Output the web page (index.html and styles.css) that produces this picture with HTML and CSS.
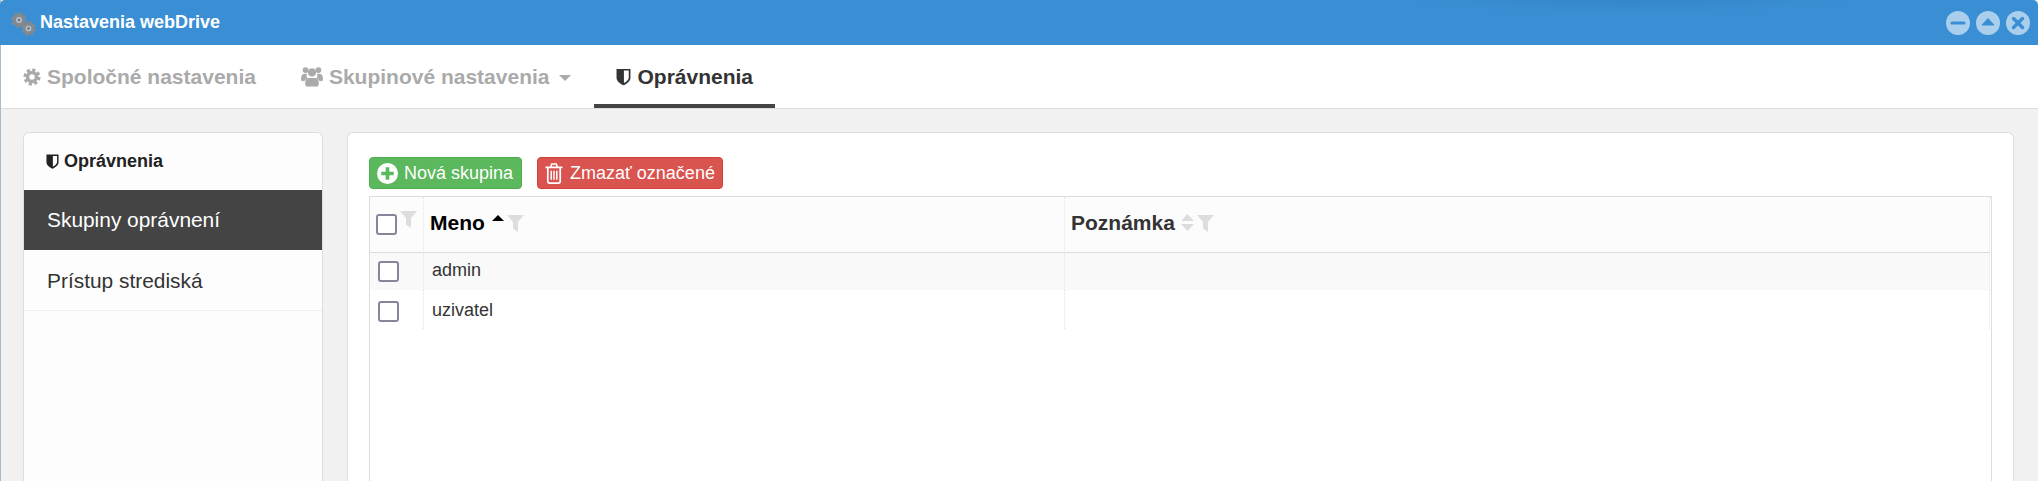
FILE: index.html
```html
<!DOCTYPE html>
<html lang="sk">
<head>
<meta charset="utf-8">
<title>Nastavenia webDrive</title>
<link rel="stylesheet" href="styles.css">
</head>
<body>
<svg class="defs" width="0" height="0" aria-hidden="true">
  <defs>
    <symbol id="shield" viewBox="0 0 14 16"><path d="M.5.5h13v8.200c0 3-3.200 5.600-6.500 7-3.300-1.400-6.500-4-6.500-7z" fill="currentColor"/><path d="M7.400 2h4.500v6.600c0 2-2.300 3.900-4.500 5.100z" fill="#fff"/></symbol>
    <symbol id="funnel" viewBox="0 0 17 17"><path d="M0 0h17l-6 7v10l-5-3.500V7z" fill="currentColor"/></symbol>
    <symbol id="cog-small" viewBox="0 0 16 16"><circle cx="8" cy="8" r="6.400" fill="#82898f"/><circle cx="8" cy="8" r="6.900" fill="none" stroke="#82898f" stroke-width="2.200" stroke-dasharray="2.710 2.710"/><circle cx="8" cy="8" r="3" fill="#bcc5ce"/><circle cx="8" cy="8" r="1.500" fill="#6e7a86"/></symbol>
  </defs>
</svg>
<div class="window">
  <header class="titlebar">
    <div class="title">
      <svg class="title-icon" viewBox="0 0 25 24" aria-hidden="true">
        <use href="#cog-small" x="0" y="0" width="16" height="16"/>
        <use href="#cog-small" x="10" y="9" width="15" height="15"/>
      </svg>
      <span>Nastavenia webDrive</span>
    </div>
    <div class="win-controls">
      <span class="win-btn"><svg viewBox="0 0 24 24" aria-hidden="true"><path d="M6 12h12" stroke="#3a8fd4" stroke-width="3.200" stroke-linecap="round"/></svg></span>
      <span class="win-btn"><svg viewBox="0 0 24 24" aria-hidden="true"><path d="M12 7.500l6 6.500H6z" fill="#3a8fd4" stroke="#3a8fd4" stroke-linejoin="round"/></svg></span>
      <span class="win-btn"><svg viewBox="0 0 24 24" aria-hidden="true"><path d="M7.500 7.500l9 9M16.500 7.500l-9 9" stroke="#3a8fd4" stroke-width="3.400" stroke-linecap="round"/></svg></span>
    </div>
  </header>

  <nav class="tabs">
    <a class="tab">
      <svg class="tab-icon" viewBox="0 0 20 20" aria-hidden="true"><g fill="none" stroke="currentColor"><circle cx="10" cy="10" r="5" stroke-width="4"/><circle cx="10" cy="10" r="7.800" stroke-width="3.400" stroke-dasharray="3.500 2.630"/></g></svg>
      Spoločné nastavenia
    </a>
    <a class="tab">
      <svg class="tab-icon users" viewBox="0 0 24 22" aria-hidden="true"><g fill="currentColor"><circle cx="5" cy="4" r="3.200"/><circle cx="19" cy="4" r="3.200"/><circle cx="12" cy="6.500" r="4.500"/><path d="M0 14c0-3.500 1.500-6 3.500-6h3c-.7 1.500-.5 3.500.5 5-1.500.5-2.500 1.500-3 3H1.500C.5 16 0 15 0 14zM24 14c0-3.500-1.500-6-3.500-6h-3c.7 1.500.5 3.500-.5 5 1.500.5 2.500 1.500 3 3h2.500c1 0 1.500-1 1.500-2zM8 12.500h8c2 0 3.500 2.500 3.500 6 0 2.200-1 3.500-2.500 3.500H7c-1.500 0-2.500-1.300-2.500-3.500 0-3.500 1.500-6 3.500-6z"/></g></svg>
      Skupinové nastavenia
      <span class="caret"></span>
    </a>
    <a class="tab active">
      <svg class="tab-icon shield"><use href="#shield"/></svg>
      Oprávnenia
    </a>
  </nav>

  <main class="content">
    <aside class="side-panel">
      <h2 class="side-head"><svg class="side-shield"><use href="#shield"/></svg>Oprávnenia</h2>
      <a class="side-item selected">Skupiny oprávnení</a>
      <a class="side-item">Prístup strediská</a>
    </aside>

    <section class="main-panel">
      <div class="toolbar">
        <button class="btn btn-green">
          <svg class="btn-icon" viewBox="0 0 22 22" aria-hidden="true"><circle cx="11" cy="11" r="11" fill="#fff"/><path d="M11 4.500v13M4.500 11h13" stroke="#5cb85c" stroke-width="3.800"/></svg>
          Nová skupina
        </button>
        <button class="btn btn-red">
          <svg class="btn-icon trash" viewBox="0 0 18 21" aria-hidden="true"><g fill="none" stroke="#fff" stroke-width="1.700"><path d="M.5 4.400h17M2.800 4.400V18.300c0 1 .7 1.800 1.700 1.800h9c1 0 1.700-.8 1.700-1.800V4.400M5.700 4.200l1-3.200h4.600l1 3.200"/><path d="M6.200 7.800v9M9 7.800v9M11.800 7.800v9" stroke-width="1.500"/></g></svg>
          Zmazať označené
        </button>
      </div>

      <div class="grid-wrap">
        <table class="grid">
          <colgroup><col class="col-check"><col class="col-name"><col></colgroup>
          <thead>
            <tr>
              <th class="check-cell">
                <span class="checkbox"></span><svg class="funnel small"><use href="#funnel"/></svg>
              </th>
              <th class="th-dark">Meno<span class="sort-up"></span><svg class="funnel"><use href="#funnel"/></svg></th>
              <th>Poznámka<svg class="sort-both" viewBox="0 0 13 17" aria-hidden="true"><path d="M6.500 0L13 7H0zM0 10h13l-6.500 7z" fill="#ddd"/></svg><svg class="funnel"><use href="#funnel"/></svg></th>
            </tr>
          </thead>
          <tbody>
            <tr class="row-a"><td class="check-cell"><span class="checkbox"></span></td><td>admin</td><td></td></tr>
            <tr class="row-b"><td class="check-cell"><span class="checkbox"></span></td><td>uzivatel</td><td></td></tr>
          </tbody>
        </table>
      </div>
    </section>
  </main>
</div>
</body>
</html>
```
FILE: styles.css
```css
* { box-sizing: border-box; }
html, body { margin: 0; height: 100%; overflow: hidden; background: #f1f1f1; }
body { font-family: "Liberation Sans", Arial, sans-serif; color: #333; }
.defs { position: absolute; }

.window {
  height: 481px;
  display: flex;
  flex-direction: column;
  border-left: 1px solid #a9bac8;
  background: #f1f1f1;
}

.titlebar {
  flex: 0 0 45px;
  display: flex;
  align-items: center;
  justify-content: space-between;
  margin-left: -1px;
  padding: 0 8px 0 11px;
  border-radius: 5px 5px 0 0;
  background:
    radial-gradient(ellipse 230px 14px at 1630px 0, rgba(40, 100, 160, .22), rgba(40, 100, 160, 0)),
    #3a8fd4;
}
.title { display: flex; align-items: center; color: #fff; font-size: 18px; font-weight: bold; }
.title-icon { width: 25px; height: 24px; margin-right: 4px; margin-top: 3px; }
.win-controls { display: flex; gap: 6px; margin-top: 1px; }
.win-btn { width: 24px; height: 24px; border-radius: 50%; background: #a9cfec; display: block; }
.win-btn svg { display: block; width: 24px; height: 24px; }

.tabs {
  flex: 0 0 63px;
  display: flex;
  gap: 1px;
  background: #fff;
  border-bottom: 1px solid #ddd;
}
.tab {
  display: flex;
  align-items: center;
  height: 63px;
  padding: 0 22px;
  color: #aaa;
  font-size: 21px;
  font-weight: bold;
  white-space: nowrap;
}
.tab.active { color: #333; border-bottom: 4px solid #444; padding-top: 4px; }
.tab-icon { width: 18px; height: 18px; margin-right: 6px; }
.tab-icon.users { width: 22px; height: 21px; margin-right: 6px; }
.tab-icon.shield { width: 15px; height: 18px; margin-right: 7px; }
.caret {
  margin-left: 9px;
  margin-top: 2px;
  border-top: 6px solid #aaa;
  border-left: 6px solid transparent;
  border-right: 6px solid transparent;
}

.content { flex: 1; min-height: 0; display: flex; gap: 24px; padding: 23px 24px 0 22px; overflow: hidden; }

.side-panel, .main-panel {
  background: #fff;
  border: 1px solid #ddd;
  border-bottom: 0;
  border-radius: 6px 6px 0 0;
  height: 400px;
}
.side-panel { flex: 0 0 300px; background: #fdfdfd; }
.main-panel { flex: 1; min-width: 0; padding: 24px 21px 0 21px; }

.side-head {
  display: flex;
  align-items: center;
  height: 57px;
  margin: 0;
  padding: 0 0 0 22px;
  font-size: 18px;
  font-weight: bold;
  color: #222;
}
.side-shield { width: 13px; height: 15px; margin-right: 5px; }
.side-item {
  display: flex;
  align-items: center;
  height: 61px;
  padding: 1px 0 0 23px;
  font-size: 20.900px;
  border-bottom: 1px solid #eee;
}
.side-item.selected { height: 60px; padding-top: 0; background: #444; color: #fff; border-bottom: 0; }

.toolbar { display: flex; gap: 15px; height: 39px; align-items: flex-start; }
.btn {
  display: flex;
  align-items: center;
  height: 32px;
  padding: 0 8px 0 7px;
  border-radius: 4px;
  border: 1px solid;
  color: #fff;
  font: 18px "Liberation Sans", Arial, sans-serif;
}
.btn-green { background: #5cb85c; border-color: #4cae4c; }
.btn-red { background: #d9534f; border-color: #d43f3a; padding-right: 7px; }
.btn-icon { width: 21px; height: 21px; margin-right: 6px; }
.btn-icon.trash { width: 18px; height: 21px; margin-right: 7px; }

.grid-wrap { height: 300px; border: 1px solid #ddd; border-bottom: 0; padding-right: 1px; }
.grid { width: 100%; border-collapse: separate; border-spacing: 0; table-layout: fixed; font-size: 18px; }
.col-check { width: 54px; }
.col-name { width: 641px; }
.grid th {
  height: 56px;
  text-align: left;
  font-size: 21px;
  font-weight: bold;
  padding: 0 0 4px 6px;
  background: #fcfcfc;
  border-right: 1px dotted #e3e3e3;
  border-bottom: 1px solid #ddd;
  white-space: nowrap;
}
.grid th.th-dark { color: #000; }
.grid td { padding: 0 0 0 8px; border-right: 1px dotted #e3e3e3; }
.row-a td { height: 37px; background: #f9f9f9; padding-bottom: 2px; }
.row-b td { height: 39px; padding-top: 2px; }
.grid .check-cell { padding: 0 0 0 8px; position: relative; }
.grid .row-b .check-cell { padding-top: 4px; }
.grid th.check-cell { padding: 0 0 0 6px; }

.checkbox {
  display: block;
  width: 21px;
  height: 21px;
  background: #fff;
  border: 2px solid #86869a;
  border-radius: 3px;
}
.funnel { width: 17px; height: 17px; color: #ddd; vertical-align: -2px; margin-left: 3px; }
.funnel.small { position: absolute; left: 30px; top: 14px; margin: 0; }
.sort-up {
  display: inline-block;
  vertical-align: 9px;
  margin-left: 7px;
  border-bottom: 6px solid #000;
  border-left: 6px solid transparent;
  border-right: 6px solid transparent;
}
.sort-both { width: 13px; height: 17px; margin-left: 6px; vertical-align: -1px; }
```
